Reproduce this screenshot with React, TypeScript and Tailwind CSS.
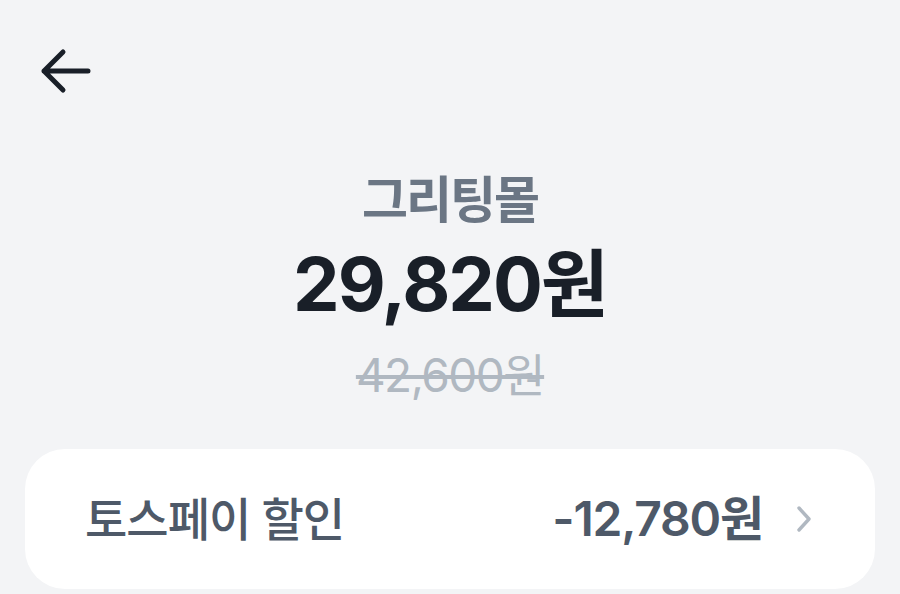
import React from "react";

const FONT = "Inter, 'Noto Sans CJK KR', 'Noto Sans', sans-serif";

function BackArrow() {
  return (
    <svg width="52" height="48" viewBox="0 0 52 48" fill="none">
      <path
        d="M4 24H48M23 5L4 24L23 43"
        stroke="#191f28"
        strokeWidth="5"
        strokeLinecap="round"
        strokeLinejoin="round"
      />
    </svg>
  );
}

function Chevron() {
  return (
    <svg width="18" height="28" viewBox="0 0 18 28" fill="none">
      <path
        d="M4 3L14 14L4 25"
        stroke="#b0b8c1"
        strokeWidth="3.4"
        strokeLinecap="round"
        strokeLinejoin="round"
      />
    </svg>
  );
}

export default function App() {
  return (
    <div
      className="min-h-[594px] w-full bg-[#f3f4f6] flex flex-col overflow-hidden"
      style={{ fontFamily: FONT }}
    >
      <div className="pl-[40px] pt-[47px]">
        <BackArrow />
      </div>

      <div className="mt-[75px] flex flex-col items-center">
        <div className="text-[50px] leading-[60px] font-semibold text-[#6b7684] tracking-[-2px]">
          그리팅몰
        </div>
        <div className="mt-[12px] text-[74px] leading-[84px] font-bold text-[#191f28] tracking-[-2px]">
          29,820원
        </div>
        <div className="mt-[23px] text-[46px] leading-[52px] font-normal text-[#b0b8c1] line-through decoration-[#b0b8c1] tracking-[-1.5px]">
          42,600원
        </div>
      </div>

      <div className="mt-[48px] mx-[25px] h-[140px] rounded-[40px] bg-white flex items-center justify-between pl-[60px] pr-[62px]">
        <span className="text-[46px] leading-[52px] font-medium text-[#4e5968] tracking-[-1px]">
          토스페이 할인
        </span>
        <div className="flex items-center gap-[32px]">
          <span className="text-[48px] leading-[52px] font-semibold text-[#4e5968] tracking-[-1.2px]">
            -12,780원
          </span>
          <Chevron />
        </div>
      </div>
    </div>
  );
}
